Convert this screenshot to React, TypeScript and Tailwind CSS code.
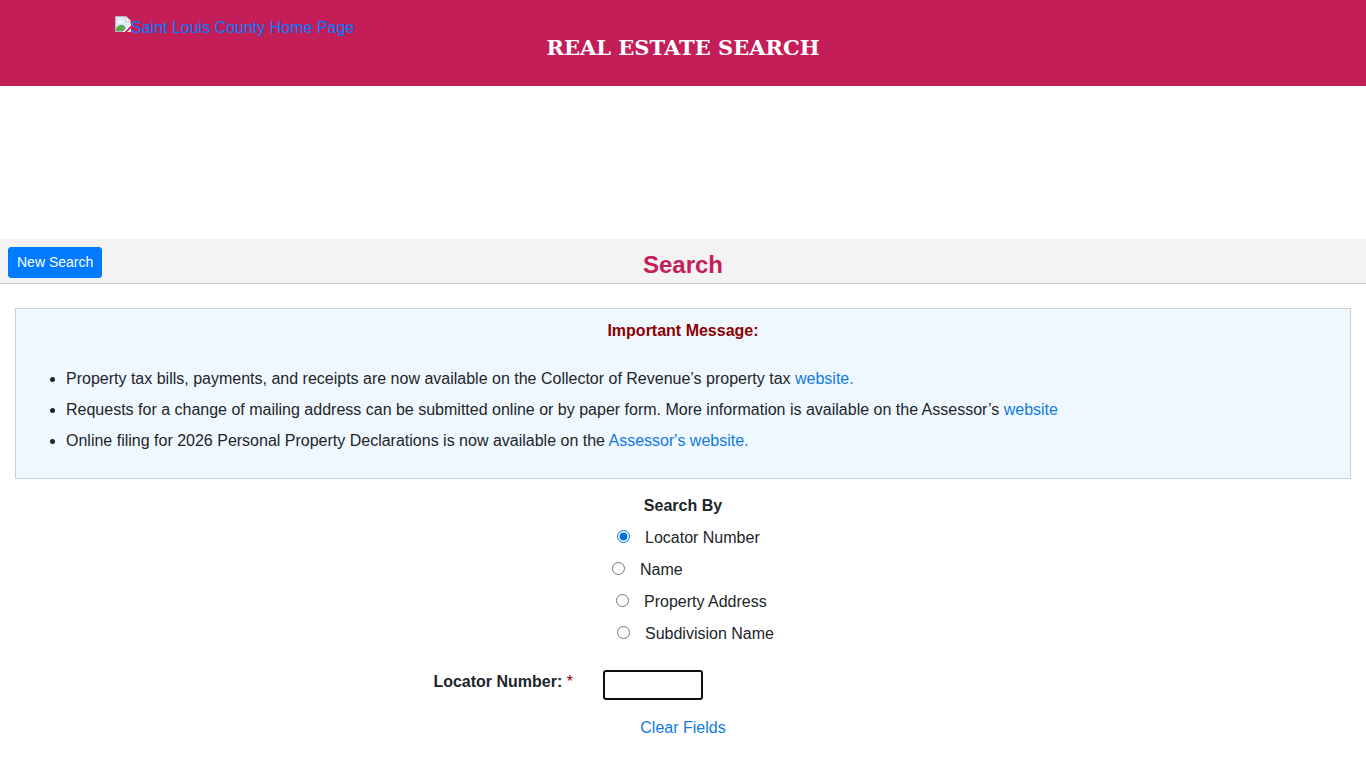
import React, { useState } from 'react';

interface SearchOption {
  value: string;
  label: string;
  indent: string;
}

const SEARCH_OPTIONS: SearchOption[] = [
  { value: 'locator', label: 'Locator Number', indent: 'pl-3.5' },
  { value: 'name', label: 'Name', indent: 'pl-[9px]' },
  { value: 'address', label: 'Property Address', indent: 'pl-[13px]' },
  { value: 'subdivision', label: 'Subdivision Name', indent: 'pl-3.5' }
];

const BrokenImage: React.FC = () => (
  <svg width="16" height="16" viewBox="0 0 16 16" className="shrink-0" aria-hidden="true">
    <path d="M0 0h11l5 5v4l-7 7H0z" fill="#b4b4b4" />
    <path d="M1 1h9.500L15 5.500V9l-6 6H1z" fill="#dce9fa" />
    <path d="M2.500 6.500a2 2 0 0 1 3.500-1.500 1.600 1.600 0 0 1 2.500 1.500z" fill="#fff" />
    <path d="M1 15v-2.500c2-3.500 5-4.500 8-3l2 3L8.500 15z" fill="#5fa552" />
    <path d="M10.500 0 16 5.500h-5.500z" fill="#f8f8f8" stroke="#b4b4b4" strokeWidth="0.6" />
    <path d="M16 7.500 7.500 16H9.500L16 9.500z" fill="#fff" />
    <path d="M16 12v4h-4z" fill="#dedede" />
  </svg>
);

const Header: React.FC = () => (
  <header className="bg-[#c41e58] h-[86px]">
    <div className="max-w-[1140px] mx-auto px-0.5 grid grid-cols-[1fr_auto_1fr]">
      <a href="#" className="flex items-start pt-4 text-[#007bff]">
        <BrokenImage />
        <span>Saint Louis County Home Page</span>
      </a>
      <h1 className="pt-8 text-[21px] leading-8 font-bold text-white font-['Rockwell','DejaVu_Serif',serif]">
        REAL ESTATE SEARCH
      </h1>
    </div>
  </header>
);

const Toolbar: React.FC = () => (
  <div className="grid grid-cols-[1fr_auto_1fr] h-[45px] px-2 pt-2 bg-[#f3f3f3] border-b border-[#cccccc]">
    <div>
      <button className="block h-[31px] px-2 pb-0.5 rounded-[3px] border border-[#007bff] bg-[#007bff] text-sm text-white">
        New Search
      </button>
    </div>
    <h2 className="pt-0.5 text-2xl font-bold text-[#c41e58]">Search</h2>
  </div>
);

const ImportantMessage: React.FC = () => (
  <section className="mx-[15px] mt-6 pt-2.5 pb-[25px] border border-[#c5d2dc] bg-[#f0f8ff]">
    <h3 className="text-center font-bold text-[#8b0000]">Important Message:</h3>
    <ul className="mt-6 pl-[50px] list-disc space-y-[7px]">
      <li>
        Property tax bills, payments, and receipts are now available on the Collector of Revenue’s property tax{' '}
        <a href="#" className="text-[#0f7ae0]">website.</a>
      </li>
      <li>
        Requests for a change of mailing address can be submitted online or by paper form. More information is available on the Assessor’s{' '}
        <a href="#" className="text-[#0f7ae0]">website</a>
      </li>
      <li>
        Online filing for 2026 Personal Property Declarations is now available on the{' '}
        <a href="#" className="text-[#0f7ae0]">Assessor's website.</a>
      </li>
    </ul>
  </section>
);

export default function App() {
  const [searchBy, setSearchBy] = useState('locator');
  const [locator, setLocator] = useState('');

  return (
    <div className="text-base text-[#212529] font-['Liberation_Sans',Arial,sans-serif]">
      <Header />

      <main className="pt-[153px] pb-6">
        <Toolbar />
        <ImportantMessage />

        <form className="max-w-[1140px] mx-auto pt-[15px]" onSubmit={(e) => e.preventDefault()}>
          <fieldset>
            <legend className="mx-auto font-bold">Search By</legend>
            <div className="grid grid-cols-12 pt-2">
              <div className="col-start-6 col-span-7 px-[15px] space-y-2">
                {SEARCH_OPTIONS.map((option) => (
                  <label key={option.value} className={`flex items-start gap-[15px] ${option.indent}`}>
                    <input
                      type="radio"
                      name="searchBy"
                      className="mt-1 size-[13px] accent-[#0075d8]"
                      checked={searchBy === option.value}
                      onChange={() => setSearchBy(option.value)}
                    />
                    {option.label}
                  </label>
                ))}
              </div>
            </div>
          </fieldset>

          <div className="grid grid-cols-12 pt-6">
            <label htmlFor="locator" className="col-span-5 px-[15px] text-right font-bold">
              Locator Number: <span className="font-normal text-[#8b0000]">*</span>
            </label>
            <div className="col-span-7 px-[15px]">
              <input
                id="locator"
                type="text"
                className="block w-[100px] h-[30px] px-1 rounded-[3px] border-2 border-[#101010] bg-white outline-none"
                value={locator}
                onChange={(e) => setLocator(e.target.value)}
              />
            </div>
          </div>

          <div className="pt-4 text-center">
            <a href="#" className="text-[#0f7ae0]" onClick={() => setLocator('')}>Clear Fields</a>
          </div>
        </form>
      </main>
    </div>
  );
}
